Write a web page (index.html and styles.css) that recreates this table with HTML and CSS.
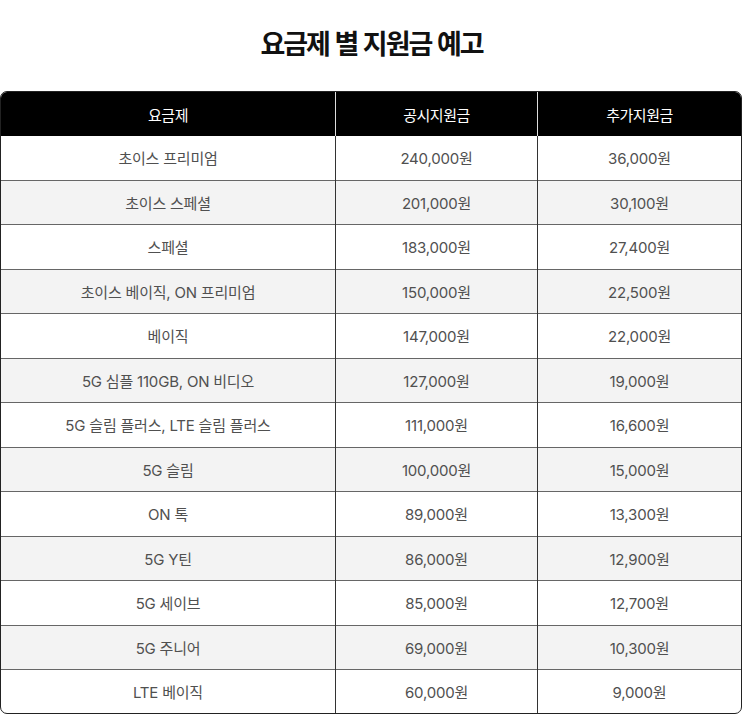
FILE: index.html
```html
<!DOCTYPE html>
<html lang="ko">
<head>
<meta charset="utf-8">
<link rel="stylesheet" href="styles.css">
</head>
<body>
<h1 class="title">요금제 별 지원금 예고</h1>
<div class="table-wrap">
<table class="plan-table">
<thead>
<tr><th class="c1">요금제</th><th class="c2">공시지원금</th><th class="c3">추가지원금</th></tr>
</thead>
<tbody>
<tr><td>초이스 프리미엄</td><td>240,000원</td><td>36,000원</td></tr>
<tr><td>초이스 스페셜</td><td>201,000원</td><td>30,100원</td></tr>
<tr><td>스페셜</td><td>183,000원</td><td>27,400원</td></tr>
<tr><td>초이스 베이직, ON 프리미엄</td><td>150,000원</td><td>22,500원</td></tr>
<tr><td>베이직</td><td>147,000원</td><td>22,000원</td></tr>
<tr><td>5G 심플 110GB, ON 비디오</td><td>127,000원</td><td>19,000원</td></tr>
<tr><td>5G 슬림 플러스, LTE 슬림 플러스</td><td>111,000원</td><td>16,600원</td></tr>
<tr><td>5G 슬림</td><td>100,000원</td><td>15,000원</td></tr>
<tr><td>ON 톡</td><td>89,000원</td><td>13,300원</td></tr>
<tr><td>5G Y틴</td><td>86,000원</td><td>12,900원</td></tr>
<tr><td>5G 세이브</td><td>85,000원</td><td>12,700원</td></tr>
<tr><td>5G 주니어</td><td>69,000원</td><td>10,300원</td></tr>
<tr><td>LTE 베이직</td><td>60,000원</td><td>9,000원</td></tr>
</tbody>
</table>
</div>
</body>
</html>
```
FILE: styles.css
```css
html, body {
  margin: 0;
  padding: 0;
  background: #fff;
}
body {
  font-family: Inter, "Noto Sans CJK KR", "Noto Sans", sans-serif;
  color: #444;
}
.title {
  margin: 0;
  height: 91px;
  padding-top: 23px;
  box-sizing: border-box;
  text-align: center;
  font-family: "Noto Sans CJK KR", sans-serif;
  font-size: 27px;
  line-height: 40px;
  font-weight: 700;
  letter-spacing: -2px;
  color: #111;
}
.table-wrap {
  margin: 0 1px 0 0;
  border: 1px solid #222;
  border-radius: 7px;
  overflow: hidden;
  height: 623px;
  box-sizing: border-box;
}
.plan-table {
  width: 100%;
  border-collapse: collapse;
  table-layout: fixed;
}
.plan-table th {
  background: #000;
  color: #fff;
  font-weight: 400;
  font-size: 15px;
  letter-spacing: -0.5px;
  height: 44px;
  padding: 0;
  text-align: center;
}
.plan-table th.c1 { width: 334px; border-right: 1px solid #ddd; }
.plan-table th.c2 { width: 201px; border-right: 1px solid #ddd; }
.plan-table td {
  height: 43.5px;
  padding: 0;
  text-align: center;
  font-size: 15px;
  letter-spacing: -0.2px;
  color: #505050;
  border-top: 1px solid #666;
  border-right: 1px solid #333;
}
.plan-table td:last-child { border-right: none; }
.plan-table tbody tr:first-child td { border-top: none; }
.plan-table tbody tr:nth-child(even) td { background: #f3f3f3; }
```
